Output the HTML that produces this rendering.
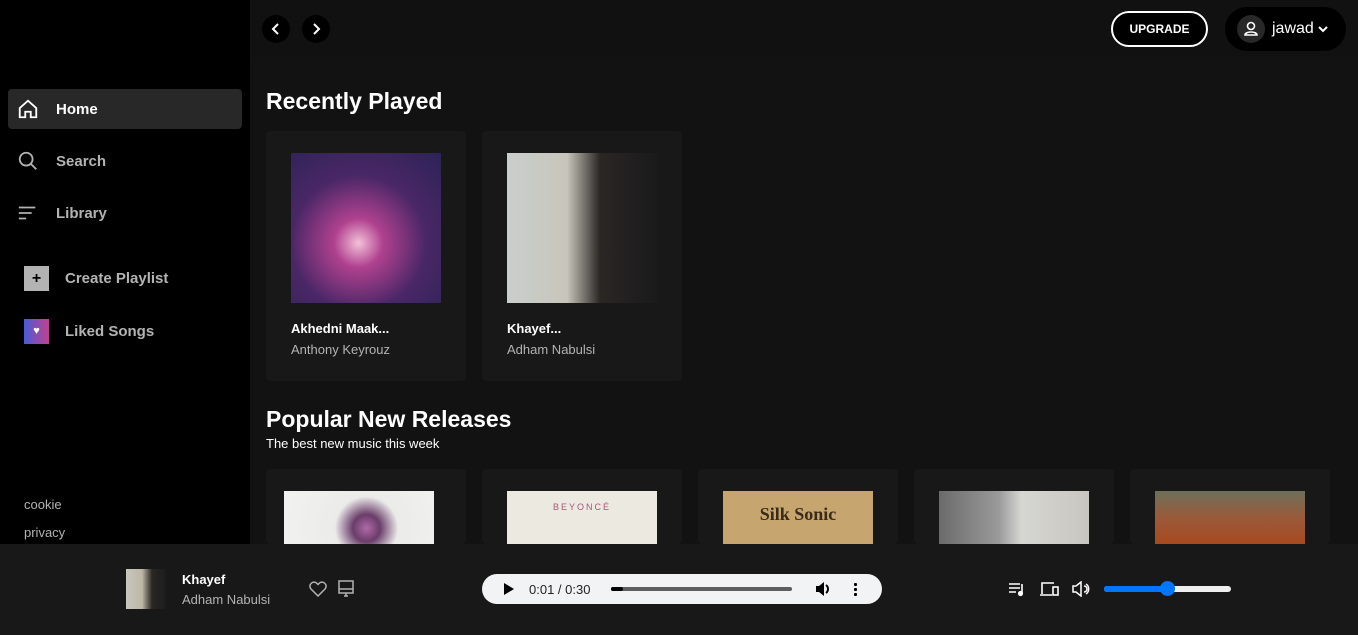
<!DOCTYPE html><html><head><meta charset="utf-8"><style>
*{margin:0;padding:0;box-sizing:border-box}
html{width:1358px;height:635px;overflow:hidden}
body{width:1358px;height:635px;overflow:hidden;background:#121212;font-family:"Liberation Sans",sans-serif;color:#fff;position:relative}
.side{position:absolute;left:0;top:0;width:250px;height:544px;background:#000}
.nav{position:absolute;left:8px;width:234px;height:40px;border-radius:4px;display:flex;align-items:center;font-size:15px;font-weight:bold;color:#b3b3b3}
.nav svg{position:absolute;left:9px}
.nav span{position:absolute;left:48px}
.pl{position:absolute;left:24px;display:flex;align-items:center;font-size:15px;font-weight:bold;color:#b3b3b3}
.pl i{display:block;width:25px;height:25px;margin-right:16px}
.foot{position:absolute;left:24px;font-size:13px;color:#b3b3b3}
.main{position:absolute;left:250px;top:0;width:1108px;height:544px;overflow:hidden}
.circ{position:absolute;top:15px;width:28px;height:28px;border-radius:50%;background:#000}
h2{position:absolute;left:16px;font-size:23px;font-weight:bold}
.card{position:absolute;width:200px;height:250px;background:#181818;border-radius:4px;overflow:hidden}
.card .art{position:absolute;left:25px;top:22px;width:150px;height:150px}
.card.s{height:75px}
.card.s .art{height:53px}
.card b{position:absolute;left:25px;top:190px;font-size:13px}
.card p{position:absolute;left:25px;top:211px;font-size:13px;color:#b3b3b3}
.bar{position:absolute;left:0;top:544px;width:1358px;height:91px;background:#181818}
</style></head><body>
<div class="side">
<div class="nav" style="top:89px;background:#282828;color:#fff"><svg width="22" height="22" viewBox="0 0 24 24" fill="none" stroke="#fff" stroke-width="2"><path d="M3 11L12 3l9 8v10h-6v-6h-6v6H3z"/></svg><span>Home</span></div>
<div class="nav" style="top:141px"><svg width="22" height="22" viewBox="0 0 24 24" fill="none" stroke="#b3b3b3" stroke-width="2"><circle cx="10" cy="10" r="7"/><path d="M15 15l6 6"/></svg><span>Search</span></div>
<div class="nav" style="top:193px"><svg width="22" height="22" viewBox="0 0 24 24" fill="none" stroke="#b3b3b3" stroke-width="2"><path d="M2 6h18M2 12h14M2 18h8"/></svg><span>Library</span></div>
<div class="pl" style="top:266px"><i style="background:#b3b3b3;color:#000;text-align:center;font-style:normal;line-height:25px;font-size:16px">+</i>Create Playlist</div>
<div class="pl" style="top:319px"><i style="background:linear-gradient(90deg,#4a5bd6,#c2418f);color:#fff;text-align:center;font-style:normal;line-height:25px;font-size:11px">♥</i>Liked Songs</div>
<div class="foot" style="top:497px">cookie</div>
<div class="foot" style="top:525px">privacy</div>
</div>
<div class="main">
<div style="position:absolute;left:0;top:0;width:1108px;height:57px;background:#111"></div>
<div class="circ" style="left:12px"><svg width="28" height="28" viewBox="0 0 28 28" fill="none" stroke="#fff" stroke-width="2"><path d="M16 9l-5 5 5 5"/></svg></div>
<div class="circ" style="left:52px"><svg width="28" height="28" viewBox="0 0 28 28" fill="none" stroke="#fff" stroke-width="2"><path d="M12 9l5 5-5 5"/></svg></div>
<div style="position:absolute;left:861px;top:11px;width:97px;height:36px;border:2px solid #fff;border-radius:18px;background:#000;font-size:12px;font-weight:bold;text-align:center;line-height:32px">UPGRADE</div>
<div style="position:absolute;left:975px;top:7px;width:121px;height:44px;border-radius:22px;background:#000">
<div style="position:absolute;left:12px;top:8px;width:28px;height:28px;border-radius:50%;background:#282828"><svg width="28" height="28" viewBox="0 0 28 28" fill="none" stroke="#fff" stroke-width="1.6"><circle cx="14" cy="11" r="3.5"/><path d="M8 20c0-4 12-4 12 0z"/></svg></div>
<span style="position:absolute;left:47px;top:13px;font-size:16px">jawad</span>
<svg style="position:absolute;left:92px;top:16px" width="12" height="12" viewBox="0 0 12 12" fill="none" stroke="#fff" stroke-width="2"><path d="M2 4l4 4 4-4"/></svg></div>
<h2 style="top:88px">Recently Played</h2>
<div class="card" style="left:16px;top:131px"><div class="art" style="background:radial-gradient(circle at 45% 60%,#f3c1d8 0,#b0418f 20%,#4a2766 55%,#2c2356 100%)"></div><b>Akhedni Maak...</b><p>Anthony Keyrouz</p></div>
<div class="card" style="left:232px;top:131px"><div class="art" style="background:linear-gradient(90deg,#c9cfcc 0,#c8c6bb 40%,#2a2724 62%,#1a1a1c 100%)"></div><b>Khayef...</b><p>Adham Nabulsi</p></div>
<h2 style="top:406px">Popular New Releases</h2>
<div style="position:absolute;left:16px;top:436px;font-size:13px;color:#fff">The best new music this week</div>
<div class="card s" style="left:16px;top:469px"><div class="art" style="left:18px;background:radial-gradient(circle at 55% 70%,#b06aa8 0,#6a3d6a 15%,#ebebea 35%,#f2f2f0 100%)"></div></div>
<div class="card s" style="left:232px;top:469px"><div class="art" style="background:#ece9e0"></div><div style="position:absolute;left:25px;top:33px;width:150px;text-align:center;font-size:9px;color:#a15a7a;letter-spacing:2px">BEYONCÉ</div></div>
<div class="card s" style="left:448px;top:469px"><div class="art" style="background:#c7a56e"></div><div style="position:absolute;left:25px;top:35px;width:150px;text-align:center;font-size:18px;font-weight:bold;color:#3a2a1a;font-family:'Liberation Serif',serif">Silk Sonic</div></div>
<div class="card s" style="left:664px;top:469px"><div class="art" style="background:linear-gradient(90deg,#6b6b6b,#9a9a9a 40%,#d6d6d2 55%,#c8c6c0)"></div></div>
<div class="card s" style="left:880px;top:469px"><div class="art" style="background:linear-gradient(180deg,#6c705a,#9a5a3a 50%,#a84a20)"></div></div>
</div>
<div class="bar">
<div style="position:absolute;left:126px;top:25px;width:40px;height:40px;background:linear-gradient(90deg,#c8c8be 0,#bdb7a6 40%,#2a2724 65%,#1c1c1c)"></div>
<div style="position:absolute;left:182px;top:28px;font-size:13px;font-weight:bold">Khayef</div>
<div style="position:absolute;left:182px;top:48px;font-size:13px;color:#b3b3b3">Adham Nabulsi</div>
<svg style="position:absolute;left:309px;top:37px" width="18" height="16" viewBox="0 0 18 16" fill="none" stroke="#b3b3b3" stroke-width="1.5"><path d="M9 15L2 8a4 4 0 016-5.5L9 3.5l1-1A4 4 0 0116 8z"/></svg>
<svg style="position:absolute;left:337px;top:36px" width="18" height="18" viewBox="0 0 18 18" fill="none" stroke="#b3b3b3" stroke-width="1.5"><rect x="2" y="1" width="14" height="12"/><path d="M2 9h14M7 16h4M9 13v3"/></svg>
<div style="position:absolute;left:482px;top:30px;width:400px;height:30px;border-radius:15px;background:#f1f3f4">
<svg style="position:absolute;left:21px;top:9px" width="12" height="12" viewBox="0 0 12 12"><path d="M1 0l10 6-10 6z" fill="#000"/></svg>
<span style="position:absolute;left:47px;top:8px;font-size:13px;color:#222">0:01 / 0:30</span>
<div style="position:absolute;left:129px;top:13px;width:181px;height:4px;background:#5e5e5e;border-radius:2px"><div style="width:12px;height:4px;background:#000;border-radius:2px"></div></div>
<svg style="position:absolute;left:333px;top:7px" width="16" height="16" viewBox="0 0 16 16"><path d="M1 5h3l5-4v14l-5-4H1z" fill="#000"/><path d="M11 4a5 5 0 010 8" stroke="#000" stroke-width="2" fill="none"/></svg>
<div style="position:absolute;left:372px;top:8px;width:3px;height:14px;background:radial-gradient(circle,#000 1.5px,transparent 1.6px) 0 0/3px 5px"></div>
</div>
<svg style="position:absolute;left:1008px;top:37px" width="18" height="16" viewBox="0 0 18 16" fill="none" stroke="#fff" stroke-width="1.6"><path d="M1 3h11M1 7h11M1 11h7M14 3v9"/><circle cx="12.5" cy="12.5" r="1.8" fill="#fff"/></svg>
<svg style="position:absolute;left:1039px;top:37px" width="22" height="16" viewBox="0 0 22 16" fill="none" stroke="#fff" stroke-width="1.6"><path d="M3 13V2h12M1 14h12"/><rect x="14" y="6" width="5" height="8"/></svg>
<svg style="position:absolute;left:1071px;top:37px" width="20" height="16" viewBox="0 0 20 16" fill="none" stroke="#fff" stroke-width="1.5"><path d="M2 5h3l5-4v14l-5-4H2z"/><path d="M13 5a3 3 0 010 6M15 3a6 6 0 010 10"/></svg>
<div style="position:absolute;left:1104px;top:42px;width:127px;height:6px;border-radius:3px;background:#efefef"><div style="width:64px;height:6px;border-radius:3px;background:#0075ff"></div></div>
<div style="position:absolute;left:1160px;top:37px;width:15px;height:15px;border-radius:50%;background:#0075ff"></div>
</div>
</body></html>
